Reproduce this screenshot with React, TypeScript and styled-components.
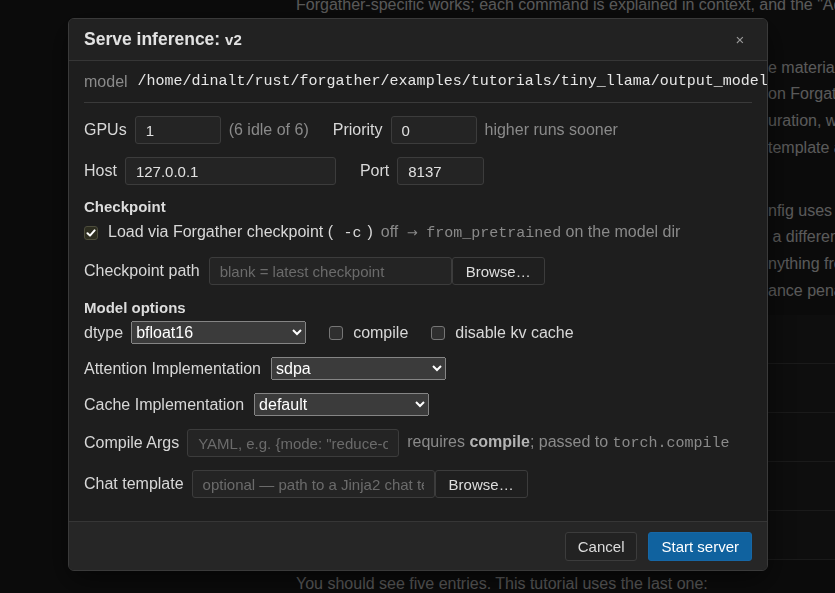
import React from "react";
import styled, { createGlobalStyle } from "styled-components";

const GlobalStyle = createGlobalStyle`
  * { box-sizing: border-box; }
  html, body {
    margin: 0;
    padding: 0;
    width: 835px;
    height: 593px;
    overflow: hidden;
    background: #1a1a1a;
  }
  body {
    font-family: "Liberation Sans", Arial, sans-serif;
    font-size: 16px;
    color: #dddddd;
  }
`;

/* ---------- background page ---------- */
const Page = styled.div`
  width: 835px;
  height: 593px;
  overflow: hidden;
  padding-left: 296px;
`;

const Article = styled.div`
  width: 900px;
  margin-top: -8px;
  color: #c8c8c8;
  font-size: 16px;
  line-height: 26.7px;
`;

const Para = styled.div`
  & + & {
    margin-top: 36px;
  }
`;

const Line = styled.div`
  white-space: nowrap;
`;

const Covered = styled.span`
  display: inline-block;
  width: 472px;
  overflow: hidden;
  vertical-align: top;
  white-space: nowrap;
`;

const Table = styled.div`
  margin-top: 11px;
  width: 700px;
  background: #1f1f1f;
`;

const TableRow = styled.div`
  height: 49px;
  border-bottom: 1px solid #3a3a3a;
`;

const Footnote = styled.div`
  margin-top: 11px;
  white-space: nowrap;
`;

/* ---------- modal ---------- */
const Overlay = styled.div`
  position: fixed;
  inset: 0;
  background: rgba(0, 0, 0, 0.55);
  display: flex;
  align-items: flex-start;
  justify-content: flex-start;
  padding: 18px 0 0 68px;
`;

const Modal = styled.div`
  width: 700px;
  background: #1e1e1e;
  border: 1px solid #3a3a3a;
  border-radius: 6px;
  overflow: hidden;
  box-shadow: 0 10px 30px rgba(0, 0, 0, 0.5);
  line-height: 20px;
`;

const Header = styled.div`
  height: 42px;
  display: flex;
  align-items: center;
  justify-content: space-between;
  padding: 0 15px;
  background: #222222;
  border-bottom: 1px solid #363636;
`;

const Title = styled.h2`
  margin: 0;
  font-size: 17.5px;
  font-weight: 700;
  color: #e2e2e2;
`;

const TitleTag = styled.span`
  font-size: 15px;
`;

const CloseButton = styled.button`
  width: 24px;
  padding: 0;
  background: none;
  border: 0;
  color: #9a9a9a;
  font-family: "Liberation Sans", Arial, sans-serif;
  font-size: 15px;
  cursor: pointer;
`;

const Body = styled.div`
  padding: 0 15px 23px;
`;

const ModelRow = styled.div`
  height: 42px;
  display: flex;
  align-items: center;
  gap: 10px;
  border-bottom: 1px solid #3a3a3a;
  white-space: nowrap;
`;

const Muted = styled.span`
  color: #8a8a8a;
`;

const Path = styled.span`
  flex-shrink: 0;
  font-family: "Liberation Mono", monospace;
  font-size: 15px;
  color: #e6e6e6;
`;

const Row = styled.div<{ $mt: number }>`
  display: flex;
  align-items: center;
  gap: 8px;
  margin-top: ${(p) => p.$mt}px;
  white-space: nowrap;
`;

const Label = styled.label<{ $ml?: number }>`
  margin-left: ${(p) => p.$ml ?? 0}px;
  color: #d8d8d8;
  white-space: nowrap;
`;

const TextInput = styled.input<{ $w: number }>`
  width: ${(p) => p.$w}px;
  height: 28px;
  padding: 0 10px;
  background: #242424;
  border: 1px solid #3c3c3c;
  border-radius: 3px;
  color: #e0e0e0;
  font-family: "Liberation Sans", Arial, sans-serif;
  font-size: 15px;
  outline: none;
  &::placeholder {
    color: #6b6b6b;
  }
`;

const InputGroup = styled.div<{ $ml?: number }>`
  display: flex;
  align-items: center;
  margin-left: ${(p) => p.$ml ?? 0}px;
`;

const BrowseButton = styled.button`
  height: 28px;
  padding: 0 13px;
  background: #1f1f1f;
  border: 1px solid #3c3c3c;
  border-radius: 3px;
  color: #dedede;
  font-family: "Liberation Sans", Arial, sans-serif;
  font-size: 15px;
  cursor: pointer;
`;

const Select = styled.select<{ $ml?: number }>`
  width: 175px;
  height: 23px;
  margin-left: ${(p) => p.$ml ?? 0}px;
  color-scheme: dark;
  font-family: "Liberation Sans", Arial, sans-serif;
  font-size: 16px;
`;

const SectionTitle = styled.div<{ $mt: number }>`
  margin-top: ${(p) => p.$mt}px;
  font-size: 15px;
  font-weight: 700;
  line-height: 18px;
  color: #dcdcdc;
`;

const CheckLabel = styled.label<{ $ml?: number }>`
  display: inline-flex;
  align-items: center;
  gap: 10px;
  margin-left: ${(p) => p.$ml ?? 0}px;
  color: #d8d8d8;
`;

const Box = styled.span<{ $on: boolean }>`
  width: 14px;
  height: 14px;
  flex-shrink: 0;
  display: inline-flex;
  align-items: center;
  justify-content: center;
  border-radius: 3px;
  background: ${(p) => (p.$on ? "#2d2d20" : "#2f2f2f")};
  border: 1px solid ${(p) => (p.$on ? "#4d4d3c" : "#767676")};
`;

const Code = styled.code`
  font-family: "Liberation Mono", monospace;
  font-size: 15px;
`;

const Flag = styled(Code)`
  padding: 0 6px;
`;

const Arrow = styled.span`
  margin: 0 4px;
  font-family: "DejaVu Sans", sans-serif;
  font-size: 13px;
`;

const Hint = styled.span`
  color: #8a8a8a;
  white-space: nowrap;
`;

const Strong = styled.b`
  color: #b4b4b4;
`;

const Footer = styled.div`
  display: flex;
  justify-content: flex-end;
  gap: 11px;
  padding: 10px 15px 9px;
  background: #262626;
  border-top: 1px solid #363636;
`;

const Button = styled.button<{ $primary?: boolean }>`
  height: 29px;
  padding: 0 12px;
  border-radius: 3px;
  font-family: "Liberation Sans", Arial, sans-serif;
  font-size: 15px;
  cursor: pointer;
  border: 1px solid ${(p) => (p.$primary ? "#1667a6" : "#3c3c3c")};
  background: ${(p) => (p.$primary ? "#10629f" : "#222222")};
  color: ${(p) => (p.$primary ? "#ffffff" : "#dcdcdc")};
`;

const Checkbox: React.FC<{ on: boolean }> = ({ on }) => (
  <Box $on={on}>
    {on && (
      <svg width="10" height="10" viewBox="0 0 10 10">
        <path
          d="M1.5 5.2 L4 7.6 L8.6 2.4"
          fill="none"
          stroke="#ffffff"
          strokeWidth="2"
          strokeLinecap="round"
          strokeLinejoin="round"
        />
      </svg>
    )}
  </Box>
);

export default function App() {
  return (
    <>
      <GlobalStyle />
      <Page>
        <Article>
          <Para>
            <Line>
              Forgather-specific works; each command is explained in context, and the "Advanced" notes go deeper.
            </Line>
          </Para>
          <Para>
            <Line>
              <Covered>The tutorials build on one another, so it helps to read through th</Covered>e material in order.
            </Line>
            <Line>
              <Covered>Each section assumes you have already trained a small model based </Covered>on Forgather's defaults.
            </Line>
            <Line>
              <Covered>If you changed anything in the project's training config</Covered>uration, while following along,
            </Line>
            <Line>
              <Covered>make sure that the output directory still contains the chat </Covered>template and tokenizer.
            </Line>
          </Para>
          <Para>
            <Line>
              <Covered>The inference server loads the model exactly as the training co</Covered>nfig uses it, unless
            </Line>
            <Line>
              <Covered>you override the dtype or attention implementation, or choose</Covered> a different checkpoint.
            </Line>
            <Line>
              <Covered>Compiling the model is optional and does not change a</Covered>nything from the outside,
            </Line>
            <Line>
              <Covered>but the first requests will be slow and can have a perform</Covered>ance penalty at first.
            </Line>
          </Para>
          <Table>
            <TableRow />
            <TableRow />
            <TableRow />
            <TableRow />
            <TableRow />
          </Table>
          <Footnote>You should see five entries. This tutorial uses the last one:</Footnote>
        </Article>
      </Page>

      <Overlay>
        <Modal>
          <Header>
            <Title>
              Serve inference: <TitleTag>v2</TitleTag>
            </Title>
            <CloseButton aria-label="Close">×</CloseButton>
          </Header>
          <Body>
            <ModelRow>
              <Muted>model</Muted>
              <Path>/home/dinalt/rust/forgather/examples/tutorials/tiny_llama/output_models/default_model</Path>
            </ModelRow>

            <Row $mt={13}>
              <Label>GPUs</Label>
              <TextInput $w={86} defaultValue="1" />
              <Hint>(6 idle of 6)</Hint>
              <Label $ml={16}>Priority</Label>
              <TextInput $w={86} defaultValue="0" />
              <Hint>higher runs sooner</Hint>
            </Row>

            <Row $mt={13}>
              <Label>Host</Label>
              <TextInput $w={211} defaultValue="127.0.0.1" />
              <Label $ml={16}>Port</Label>
              <TextInput $w={87} defaultValue="8137" />
            </Row>

            <SectionTitle $mt={13}>Checkpoint</SectionTitle>
            <Row $mt={6}>
              <CheckLabel>
                <Checkbox on />
                <span>
                  Load via Forgather checkpoint ( <Flag>-c</Flag>)
                </span>
              </CheckLabel>
              <Hint>
                off <Arrow>→</Arrow> <Code>from_pretrained</Code> on the model dir
              </Hint>
            </Row>

            <Row $mt={13}>
              <Label>Checkpoint path</Label>
              <InputGroup $ml={1}>
                <TextInput $w={243} placeholder="blank = latest checkpoint" />
                <BrowseButton>Browse…</BrowseButton>
              </InputGroup>
            </Row>

            <SectionTitle $mt={14}>Model options</SectionTitle>
            <Row $mt={4}>
              <Label>dtype</Label>
              <Select defaultValue="bfloat16">
                <option>bfloat16</option>
                <option>float16</option>
                <option>float32</option>
              </Select>
              <CheckLabel $ml={15}>
                <Checkbox on={false} />
                <span>compile</span>
              </CheckLabel>
              <CheckLabel $ml={15}>
                <Checkbox on={false} />
                <span>disable kv cache</span>
              </CheckLabel>
            </Row>

            <Row $mt={13}>
              <Label>Attention Implementation</Label>
              <Select $ml={2} defaultValue="sdpa">
                <option>sdpa</option>
                <option>eager</option>
                <option>flash_attention_2</option>
              </Select>
            </Row>

            <Row $mt={13}>
              <Label>Cache Implementation</Label>
              <Select $ml={2} defaultValue="default">
                <option>default</option>
                <option>static</option>
              </Select>
            </Row>

            <Row $mt={13}>
              <Label>Compile Args</Label>
              <TextInput $w={212} placeholder='YAML, e.g. {mode: "reduce-overhead"}' />
              <Hint>
                requires <Strong>compile</Strong>; passed to <Code>torch.compile</Code>
              </Hint>
            </Row>

            <Row $mt={13}>
              <Label>Chat template</Label>
              <InputGroup>
                <TextInput $w={243} placeholder="optional — path to a Jinja2 chat template" />
                <BrowseButton>Browse…</BrowseButton>
              </InputGroup>
            </Row>
          </Body>
          <Footer>
            <Button>Cancel</Button>
            <Button $primary>Start server</Button>
          </Footer>
        </Modal>
      </Overlay>
    </>
  );
}
